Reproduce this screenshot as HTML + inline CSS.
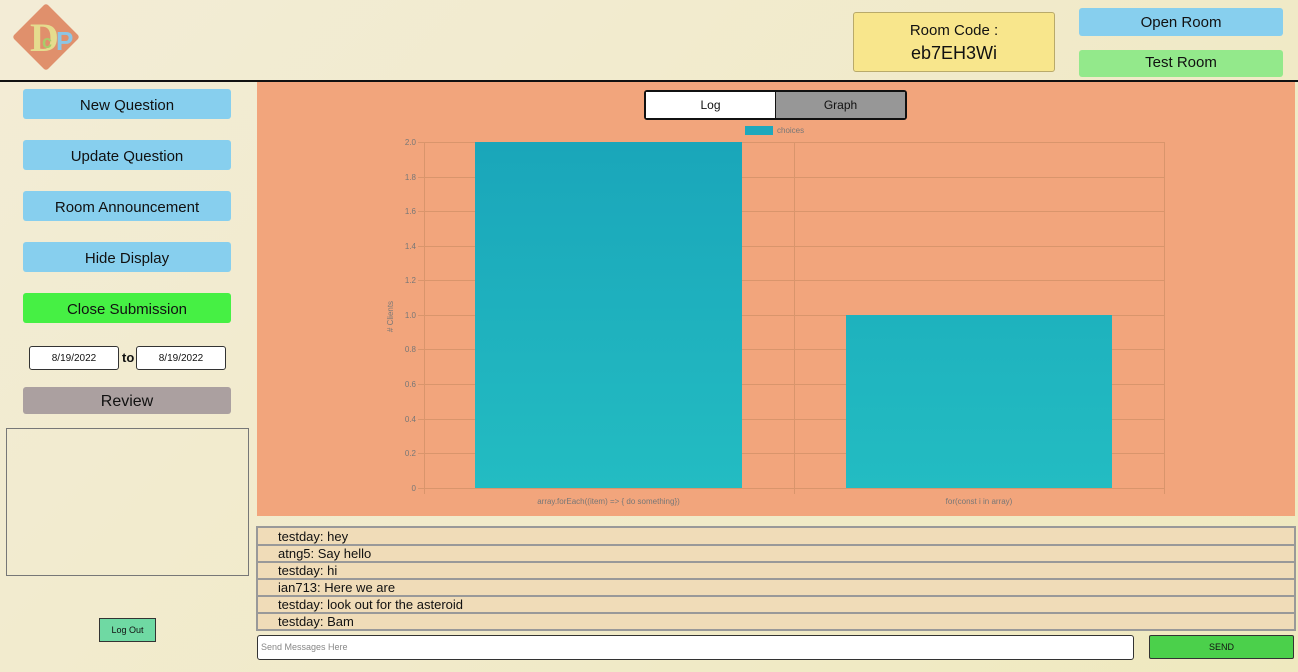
<!DOCTYPE html>
<html><head><meta charset="utf-8"><style>
*{box-sizing:border-box;margin:0;padding:0}
body{width:1298px;height:672px;overflow:hidden;font-family:"Liberation Sans",sans-serif;background:linear-gradient(135deg,#f3ecd6,#efe9bf);position:relative;color:#111}
.a{position:absolute}
.btn{position:absolute;left:23px;width:208px;height:30px;background:#87cfee;border-radius:3px;display:flex;align-items:center;justify-content:center;font-size:15px;padding-top:2px}
.lbl{position:absolute;font-size:8px;color:#777}
.grid{position:absolute;left:418px;width:746px;height:1px;background:#d9956c}
.msg{height:17px;border-bottom:2px solid #999;background:#f0dcb8;padding-left:20px;font-size:13px;line-height:16px}
</style></head><body>
<div class="a" style="left:0;top:80px;width:1298px;height:2px;background:#111"></div>
<div class="a" style="left:22px;top:13px;width:48px;height:48px;background:#e0906c;transform:rotate(45deg);border-radius:3px"></div>
<div class="a" style="left:30px;top:14px;font-size:40px;font-family:'Liberation Serif',serif;color:#e5dc8e;font-weight:bold">D</div>
<div class="a" style="left:42px;top:32px;font-size:18px;color:#a8cc6a;font-weight:bold">c</div>
<div class="a" style="left:56px;top:26px;font-size:26px;color:#8cc6e6;font-weight:bold">P</div>
<div class="a" style="left:853px;top:12px;width:202px;height:60px;background:#f8e68c;border:1px solid #b9aa6a;border-radius:3px;text-align:center;font-size:15px;padding-top:7px;line-height:22px">Room Code :<br><span style="font-size:18px">eb7EH3Wi</span></div>
<div class="a" style="left:1079px;top:8px;width:204px;height:28px;background:#87cfee;border-radius:3px;text-align:center;line-height:30px;font-size:15px">Open Room</div>
<div class="a" style="left:1079px;top:50px;width:204px;height:27px;background:#93e98b;border-radius:3px;text-align:center;line-height:25px;font-size:15px">Test Room</div>
<div class="btn" style="top:89px">New Question</div>
<div class="btn" style="top:140px">Update Question</div>
<div class="btn" style="top:191px">Room Announcement</div>
<div class="btn" style="top:242px">Hide Display</div>
<div class="btn" style="top:293px;background:#46f044">Close Submission</div>
<div class="a" style="left:29px;top:346px;width:90px;height:24px;background:#fff;border:1px solid #333;border-radius:3px;font-size:10px;text-align:center;line-height:23px">8/19/2022</div>
<div class="a" style="left:122px;top:350px;font-size:13px;font-weight:bold">to</div>
<div class="a" style="left:136px;top:346px;width:90px;height:24px;background:#fff;border:1px solid #333;border-radius:3px;font-size:10px;text-align:center;line-height:23px">8/19/2022</div>
<div class="btn" style="top:387px;height:27px;background:#aba0a0;font-size:16px">Review</div>
<div class="a" style="left:6px;top:428px;width:243px;height:148px;border:1px solid #777"></div>
<div class="a" style="left:99px;top:618px;width:57px;height:24px;background:#6fd9a3;border:1px solid #333;font-size:9px;text-align:center;line-height:22px">Log Out</div>
<div class="a" style="left:257px;top:82px;width:1038px;height:434px;background:#f2a57c"></div>
<div class="a" style="left:644px;top:90px;width:263px;height:30px;border:2px solid #111;border-radius:3px;display:flex;font-size:12px">
<div style="flex:0 0 130px;background:#fff;text-align:center;line-height:27px;border-right:1px solid #111">Log</div>
<div style="flex:1;background:#979797;text-align:center;line-height:27px">Graph</div></div>
<div class="a" style="left:745px;top:126px;width:28px;height:9px;background:#1ea8bc"></div>
<div class="lbl" style="left:777px;top:126px">choices</div>
<div class="grid" style="top:142px"></div><div class="grid" style="top:177px"></div><div class="grid" style="top:211px"></div><div class="grid" style="top:246px"></div><div class="grid" style="top:280px"></div><div class="grid" style="top:315px"></div><div class="grid" style="top:349px"></div><div class="grid" style="top:384px"></div><div class="grid" style="top:419px"></div><div class="grid" style="top:453px"></div><div class="grid" style="top:488px"></div>
<div class="a" style="left:424px;top:142px;width:1px;height:352px;background:#d9956c"></div>
<div class="a" style="left:794px;top:142px;width:1px;height:352px;background:#d9956c"></div>
<div class="a" style="left:1164px;top:142px;width:1px;height:352px;background:#d9956c"></div>
<div class="lbl" style="left:398px;top:138px;width:18px;text-align:right">2.0</div>
<div class="lbl" style="left:398px;top:173px;width:18px;text-align:right">1.8</div>
<div class="lbl" style="left:398px;top:207px;width:18px;text-align:right">1.6</div>
<div class="lbl" style="left:398px;top:242px;width:18px;text-align:right">1.4</div>
<div class="lbl" style="left:398px;top:276px;width:18px;text-align:right">1.2</div>
<div class="lbl" style="left:398px;top:311px;width:18px;text-align:right">1.0</div>
<div class="lbl" style="left:398px;top:345px;width:18px;text-align:right">0.8</div>
<div class="lbl" style="left:398px;top:380px;width:18px;text-align:right">0.6</div>
<div class="lbl" style="left:398px;top:415px;width:18px;text-align:right">0.4</div>
<div class="lbl" style="left:398px;top:449px;width:18px;text-align:right">0.2</div>
<div class="lbl" style="left:398px;top:484px;width:18px;text-align:right">0</div>
<div class="lbl" style="left:375px;top:312px;transform:rotate(-90deg)"># Clients</div>
<div class="a" style="left:475px;top:142px;width:267px;height:346px;background:linear-gradient(#1aa6ba,#23bcc2)"></div>
<div class="a" style="left:846px;top:315px;width:266px;height:173px;background:linear-gradient(#1eb2be,#23bcc2)"></div>
<div class="lbl" style="left:475px;top:497px;width:267px;text-align:center">array.forEach((item) =&gt; { do something})</div>
<div class="lbl" style="left:846px;top:497px;width:266px;text-align:center">for(const i in array)</div>
<div class="a" style="left:256px;top:526px;width:1040px;height:105px;border:2px solid #999;background:#f0dcb8;overflow:hidden">
<div class="msg" style="margin-top:1px">testday: hey</div>
<div class="msg">atng5: Say hello</div>
<div class="msg">testday: hi</div>
<div class="msg">ian713: Here we are</div>
<div class="msg">testday: look out for the asteroid</div>
<div class="msg">testday: Bam</div>
</div>
<div class="a" style="left:257px;top:635px;width:877px;height:25px;background:#fff;border:1px solid #333;border-radius:3px;font-size:9px;color:#888;line-height:23px;padding-left:3px">Send Messages Here</div>
<div class="a" style="left:1149px;top:635px;width:145px;height:24px;background:#4bd04b;border:1px solid #333;border-radius:2px;font-size:9px;text-align:center;line-height:22px">SEND</div>
</body></html>
